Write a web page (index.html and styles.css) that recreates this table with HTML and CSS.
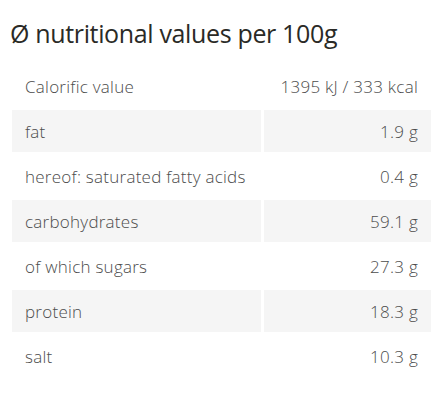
FILE: index.html
```html
<!DOCTYPE html>
<html>
<head>
<meta charset="utf-8">
<link rel="stylesheet" href="styles.css">
</head>
<body>
<div class="nutrition">
  <h2 class="title">Ø nutritional values per 100g</h2>
  <table class="table">
    <tbody>
      <tr><td class="label">Calorific value</td><td class="value">1395 kJ / 333 kcal</td></tr>
      <tr class="alt"><td class="label">fat</td><td class="value">1.9 g</td></tr>
      <tr><td class="label">hereof: saturated fatty acids</td><td class="value">0.4 g</td></tr>
      <tr class="alt"><td class="label">carbohydrates</td><td class="value">59.1 g</td></tr>
      <tr><td class="label">of which sugars</td><td class="value">27.3 g</td></tr>
      <tr class="alt"><td class="label">protein</td><td class="value">18.3 g</td></tr>
      <tr><td class="label">salt</td><td class="value">10.3 g</td></tr>
    </tbody>
  </table>
</div>
</body>
</html>
```

FILE: styles.css
```css
html, body {
  margin: 0;
  padding: 0;
  background: #ffffff;
}

.nutrition {
  padding: 0 12px 0 9px;
  font-family: "Open Sans", "Noto Sans", sans-serif;
}

.title {
  margin: 0;
  padding: 17px 0 0 1px;
  height: 47px;
  box-sizing: border-box;
  font-size: 25px;
  line-height: 32px;
  font-weight: 400;
  color: #2a2a26;
  letter-spacing: -0.35px;
}

.table {
  margin-top: 15px;
  width: 425px;
  border-collapse: separate;
  border-spacing: 3px;
  font-size: 17px;
  font-weight: 300;
  letter-spacing: 0.25px;
  color: #4c4c4c;
}

.table td {
  height: 42px;
  padding: 0 13px 0 13px;
  box-sizing: border-box;
  vertical-align: middle;
}

.label {
  width: 249px;
  text-align: left;
}

.value {
  text-align: right;
}

.alt td {
  background: #f5f5f5;
}
```
